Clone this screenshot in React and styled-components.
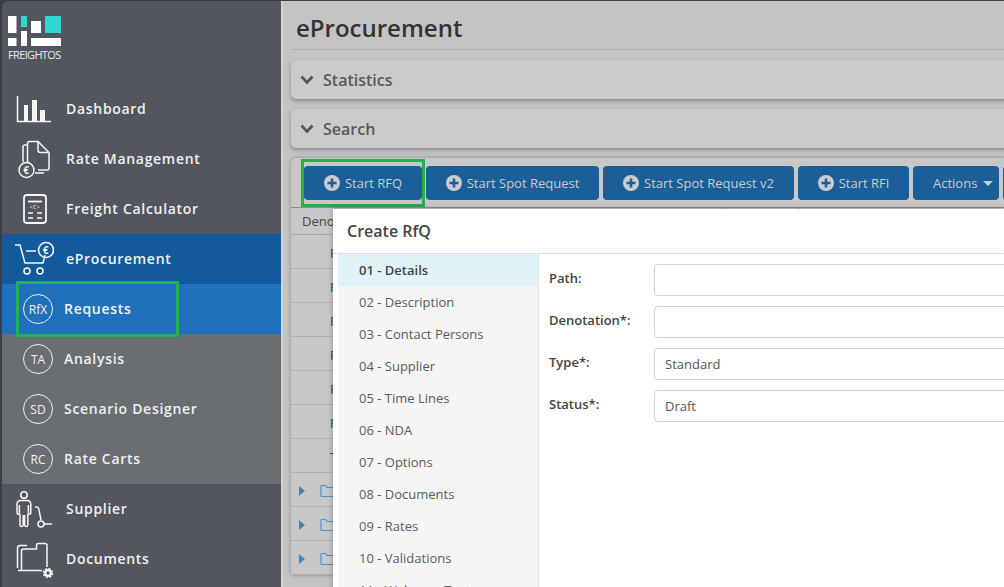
import React from "react";
import styled, { createGlobalStyle } from "styled-components";

const GlobalStyle = createGlobalStyle`
  html, body {
    margin: 0;
    height: 100%;
    overflow: hidden;
    background: #c4c4c4;
    font-family: "Open Sans", "Liberation Sans", sans-serif;
  }
  * { box-sizing: border-box; }
`;

const navTop = [
  { label: "Dashboard", icon: <DashboardIcon /> },
  { label: "Rate Management", icon: <RateIcon /> },
  { label: "Freight Calculator", icon: <CalculatorIcon /> },
];

const navSub = [
  { badge: "RfX", label: "Requests", active: true },
  { badge: "TA", label: "Analysis" },
  { badge: "SD", label: "Scenario Designer" },
  { badge: "RC", label: "Rate Carts" },
];

const toolbarButtons = [
  { label: "Start RFQ", width: 118, marked: true },
  { label: "Start Spot Request", width: 173 },
  { label: "Start Spot Request v2", width: 191 },
  { label: "Start RFI", width: 111 },
];

const steps = [
  "01 - Details", "02 - Description", "03 - Contact Persons", "04 - Supplier",
  "05 - Time Lines", "06 - NDA", "07 - Options", "08 - Documents",
  "09 - Rates", "10 - Validations", "11 - Welcome Text",
];

const rows = ["F", "F", "F", "F", "F", "F", "T"];

function Svg({ children }) {
  return (
    <svg width="40" height="44" viewBox="0 0 40 44" fill="none" stroke="#f6f6f6" strokeWidth="1.5">
      {children}
    </svg>
  );
}

function DashboardIcon() {
  return (
    <Svg>
      <path d="M3.5 9V34.5H37" />
      <path d="M10 18h4v16h-4zM18 13h5v21h-5zM26 23h5v11h-5z" fill="#f6f6f6" stroke="none" />
    </Svg>
  );
}

function RateIcon() {
  return (
    <Svg>
      <path d="M13.5 25V6.5a2 2 0 0 1 2-2H24L35 15.5V31a2 2 0 0 1-2 2H24" />
      <path d="M24 4.5V13a2.5 2.5 0 0 0 2.5 2.5H35" />
      <path d="M13.5 8H11a2 2 0 0 0-2 2V25" />
      <path d="M21 36H30" />
      <circle cx="12.5" cy="33" r="7.5" />
      <text x="12.5" y="36.5" fontSize="10" fontWeight="700" textAnchor="middle" fill="#f6f6f6" stroke="none">€</text>
    </Svg>
  );
}

function CalculatorIcon() {
  return (
    <Svg>
      <rect x="10" y="8" width="22" height="28" rx="3" strokeWidth="1.8" />
      <path d="M14 14.5H28" strokeWidth="1.8" />
      <text x="21" y="21.5" fontSize="5" textAnchor="middle" fill="#e0e0e0" stroke="none">{"<C>"}</text>
      <path d="M14 26H19M23 26H28M14 31H19M23 31H28" strokeWidth="1.6" />
    </Svg>
  );
}

function CartIcon() {
  return (
    <Svg>
      <path d="M1 8H6L11 26H29L31 18" />
      <path d="M12 14H22" />
      <circle cx="32" cy="13" r="7.5" strokeWidth="1.6" />
      <text x="32" y="16.5" fontSize="10" fontWeight="700" textAnchor="middle" fill="#f6f6f6" stroke="none">€</text>
      <circle cx="13" cy="34" r="3" />
      <circle cx="26" cy="34" r="3" />
    </Svg>
  );
}

function SupplierIcon() {
  return (
    <Svg>
      <circle cx="10" cy="8" r="3.2" />
      <path d="M6 27V38a1.6 1.6 0 0 0 3.2 0V28M10.6 28V38a1.6 1.6 0 0 0 3.2 0V27" />
      <path d="M3 26V17a3.5 3.5 0 0 1 3.5-3.5h6.8A3.5 3.5 0 0 1 16.8 17V26a1.2 1.2 0 0 1-2.4 0V18M5.4 18V26a1.2 1.2 0 0 1-2.4 0" />
      <path d="M21 20H23C24 20 24.5 21 24.8 22L27 33" />
      <circle cx="27" cy="37" r="3" />
      <path d="M30 37H38" />
    </Svg>
  );
}

function DocumentsIcon() {
  return (
    <Svg>
      <path d="M3.5 31V11a2.5 2.5 0 0 1 2.5-2.5h7" />
      <path d="M7.5 34V14a2 2 0 0 1 2-2H22.5V8.5a2 2 0 0 1 2-2H31a2 2 0 0 1 2 2V30" />
      <path d="M4 33.5H28" />
      <circle cx="34" cy="36" r="2.8" strokeWidth="2.2" />
      <circle cx="34" cy="36" r="4.4" strokeWidth="1.6" strokeDasharray="2 1.45" />
    </Svg>
  );
}

const Page = styled.div`
  display: flex;
  width: 1004px;
  height: 587px;
  overflow: hidden;
  background: #3e3e42;
`;

const Sidebar = styled.nav`
  width: 281px;
  flex: none;
  height: 587px;
  margin-top: 1px;
  padding-left: 2px;
  background: #3e3e42;
`;

const SideInner = styled.div`
  height: 100%;
  background: #53565e;
  border-top-left-radius: 6px;
`;

const LogoBlock = styled.div`
  height: 83px;
  padding: 15px 0 0 6px;
  color: #ececec;
`;

const LogoMark = styled.svg`
  display: block;
`;

const LogoText = styled.div`
  font-size: 11px;
  font-weight: 500;
  line-height: 12px;
  margin-top: 3px;
  letter-spacing: -0.65px;
`;

const NavRow = styled.div`
  position: relative;
  height: 50px;
  display: flex;
  align-items: center;
  color: #f0f0f0;
  font-size: 14px;
  font-weight: 600;
  letter-spacing: 0.7px;
  background: ${(p) => (p.$tone === "group" ? "#125a9b" : p.$tone === "active" ? "#2071bb" : p.$tone === "sub" ? "#6b6e71" : "transparent")};
`;

const NavLabel = styled.span`
  margin-top: -1px;
`;

const IconSlot = styled.span`
  width: 40px;
  height: 44px;
  margin-left: 12px;
  margin-right: 12px;
  display: flex;
`;

const Badge = styled.span`
  width: 30px;
  height: 30px;
  margin-left: 21px;
  margin-right: 11px;
  border: 1px solid #f0f0f0;
  border-radius: 50%;
  display: flex;
  align-items: center;
  justify-content: center;
  font-size: 12px;
  font-weight: 400;
  letter-spacing: 0;
`;

const NavMark = styled.span`
  position: absolute;
  z-index: 1;
  left: 14px;
  top: -3px;
  width: 163px;
  height: 56px;
  border: 3px solid #22b14c;
`;

const Main = styled.main`
  position: relative;
  flex: 1;
  min-width: 0;
  margin-top: 1px;
  padding-left: 8px;
  background: #c4c4c4;
  border-left: 2px solid #d4d4d4;
  overflow: hidden;
`;

const Title = styled.h1`
  margin: 0 0 10px 0;
  height: 49px;
  padding: 10px 0 0 5px;
  font-size: 24px;
  line-height: 34px;
  font-weight: 600;
  color: #333;
  border-bottom: 1px solid #b1b1b1;
`;

const Panel = styled.section`
  height: 39px;
  margin: 0 -6px 10px 0;
  padding-left: 9px;
  display: flex;
  align-items: center;
  gap: 9px;
  background: #cbcbcb;
  border-radius: 5px;
  box-shadow: 0 2px 4px rgba(0, 0, 0, 0.3);
  color: #5a5a5a;
  font-size: 16px;
  font-weight: 600;
`;

const TableCard = styled.section`
  margin: 0 -6px 0 0;
  background: #c8c8c8;
  border-radius: 5px 5px 0 0;
  box-shadow: 0 0 4px rgba(0, 0, 0, 0.3);
`;

const Toolbar = styled.div`
  display: flex;
  gap: 4px;
  height: 49px;
  padding: 8px 0 0 13px;
`;

const ToolButton = styled.div`
  position: relative;
  flex: none;
  width: ${(p) => p.$width}px;
  height: 34px;
  padding-left: ${(p) => p.$inset || 0}px;
  display: flex;
  align-items: center;
  justify-content: ${(p) => (p.$inset ? "flex-start" : "center")};
  gap: 5px;
  background: #1a5f99;
  border-radius: 4px;
  color: #c9ccd0;
  font-size: 13px;
`;

const ButtonMark = styled.span`
  position: absolute;
  left: -3px;
  top: -7px;
  width: 124px;
  height: 48px;
  border: 3px solid #22b14c;
`;

const Caret = styled.span`
  width: 0;
  height: 0;
  margin-left: 1px;
  border-left: 5px solid transparent;
  border-right: 5px solid transparent;
  border-top: 5px solid #c9ccd0;
`;

const HeadRow = styled.div`
  display: flex;
  height: 28px;
  border-top: 1px solid #8f8f8f;
  border-bottom: 1px solid #aaa;
  font-size: 13px;
  color: #444;
  line-height: 26px;
`;

const HeadCell = styled.div`
  width: ${(p) => p.$width}px;
  padding-left: 11px;
  border-right: 1px solid #9c9c9c;
`;

const Row = styled.div`
  height: 34px;
  padding-top: 2px;
  display: flex;
  align-items: center;
  padding-left: ${(p) => (p.$folder ? 8 : 39)}px;
  border-bottom: 1px solid #b0b0b0;
  font-size: 13px;
  color: #444;
`;

const Triangle = styled.span`
  width: 0;
  height: 0;
  border-top: 5px solid transparent;
  border-bottom: 5px solid transparent;
  border-left: 6px solid #4285bd;
  margin-right: 15px;
`;

const Modal = styled.div`
  position: absolute;
  left: 50px;
  top: 208px;
  right: 0;
  height: 400px;
  background: #fff;
  box-shadow: 0 0 6px rgba(0, 0, 0, 0.3);
`;

const ModalTitle = styled.h2`
  margin: 0;
  height: 45px;
  padding-left: 14px;
  font-size: 16px;
  line-height: 44px;
  font-weight: 600;
  color: #444;
  border-bottom: 1px dotted #c8c8c8;
`;

const ModalBody = styled.div`
  display: flex;
  height: 355px;
`;

const StepList = styled.ul`
  list-style: none;
  margin: 0 0 0 5px;
  padding: 0;
  width: 201px;
  flex: none;
  background: #f5f5f5;
  border-right: 1px solid #e2e2e2;
`;

const Step = styled.li`
  height: 32px;
  padding-left: 21px;
  line-height: 32px;
  font-size: 13px;
  font-weight: ${(p) => (p.$active ? 600 : 400)};
  color: ${(p) => (p.$active ? "#444" : "#5c5c5c")};
  background: ${(p) => (p.$active ? "#e0f3f8" : "transparent")};
`;

const Form = styled.div`
  flex: 1;
  min-width: 0;
  padding: 10px 0 0 10px;
`;

const FormRow = styled.label`
  display: flex;
  align-items: center;
  height: 32px;
  margin: 0 -12px 10px 0;
`;

const FieldLabel = styled.span`
  width: 105px;
  flex: none;
  margin-bottom: 4px;
  font-size: 13px;
  font-weight: 600;
  color: #444;
`;

const Field = styled.input`
  flex: 1;
  min-width: 0;
  height: 32px;
  padding: 0 10px;
  border: 1px solid #d2d2d2;
  border-radius: 4px;
  background: #fff;
  font-family: inherit;
  font-size: 13px;
  color: #555;
  outline: none;
`;

export default function App() {
  return (
    <Page>
      <GlobalStyle />
      <Sidebar>
        <SideInner>
          <LogoBlock>
            <LogoMark width="53" height="30" viewBox="0 0 53 30">
              <g fill="#fff">
                <rect x="0" y="0" width="8.5" height="17" />
                <rect x="23" y="5" width="10" height="12" />
                <rect x="0" y="22" width="8.5" height="8" />
                <rect x="13" y="15" width="6" height="15" />
                <rect x="23" y="22" width="30" height="8" />
              </g>
              <g fill="#33d6cf">
                <rect x="13" y="0" width="6" height="11" />
                <rect x="37" y="0" width="16" height="17" />
              </g>
            </LogoMark>
            <LogoText>FREIGHTOS</LogoText>
          </LogoBlock>
          {navTop.map((item) => (
            <NavRow key={item.label}>
              <IconSlot>{item.icon}</IconSlot>
              <NavLabel>{item.label}</NavLabel>
            </NavRow>
          ))}
          <NavRow $tone="group">
            <IconSlot><CartIcon /></IconSlot>
            <NavLabel>eProcurement</NavLabel>
          </NavRow>
          {navSub.map((item) => (
            <NavRow key={item.label} $tone={item.active ? "active" : "sub"}>
              <Badge>{item.badge}</Badge>
              <NavLabel>{item.label}</NavLabel>
              {item.active && <NavMark />}
            </NavRow>
          ))}
          <NavRow>
            <IconSlot><SupplierIcon /></IconSlot>
            <NavLabel>Supplier</NavLabel>
          </NavRow>
          <NavRow>
            <IconSlot><DocumentsIcon /></IconSlot>
            <NavLabel>Documents</NavLabel>
          </NavRow>
        </SideInner>
      </Sidebar>
      <Main>
        <Title>eProcurement</Title>
        <Panel>
          <svg width="14" height="10" viewBox="0 0 14 10" fill="none" stroke="#555" strokeWidth="2.6"><path d="M1.5 1.5L7 7.5L12.5 1.5" /></svg>
          Statistics
        </Panel>
        <Panel>
          <svg width="14" height="10" viewBox="0 0 14 10" fill="none" stroke="#555" strokeWidth="2.6"><path d="M1.5 1.5L7 7.5L12.5 1.5" /></svg>
          Search
        </Panel>
        <TableCard>
          <Toolbar>
            {toolbarButtons.map((b) => (
              <ToolButton key={b.label} $width={b.width}>
                <svg width="16" height="16" viewBox="0 0 16 16">
                  <circle cx="8" cy="8" r="8" fill="#c9ccd0" />
                  <path d="M8 3.5V12.5M3.5 8H12.5" stroke="#1a5f99" strokeWidth="2.6" />
                </svg>
                {b.label}
                {b.marked && <ButtonMark />}
              </ToolButton>
            ))}
            <ToolButton $width={86} $inset={20}>Actions <Caret /></ToolButton>
            <ToolButton $width={40} />
          </Toolbar>
          <HeadRow>
            <HeadCell $width={434}>Denotation</HeadCell>
            <HeadCell $width={75} />
          </HeadRow>
          {rows.map((r, i) => (
            <Row key={i}>{r}</Row>
          ))}
          {[0, 1, 2].map((i) => (
            <Row key={i} $folder>
              <Triangle />
              <svg width="16" height="14" viewBox="0 0 16 14" fill="none" stroke="#4f94c9" strokeWidth="1.2">
                <path d="M1 2.5a1 1 0 0 1 1-1h3.5l1.5 2h8v9H2a1 1 0 0 1-1-1z" />
              </svg>
            </Row>
          ))}
        </TableCard>
        <Modal>
          <ModalTitle>Create RfQ</ModalTitle>
          <ModalBody>
            <StepList>
              {steps.map((s, i) => (
                <Step key={s} $active={i === 0}>{s}</Step>
              ))}
            </StepList>
            <Form>
              <FormRow><FieldLabel>Path:</FieldLabel><Field readOnly /></FormRow>
              <FormRow><FieldLabel>Denotation*:</FieldLabel><Field readOnly /></FormRow>
              <FormRow><FieldLabel>Type*:</FieldLabel><Field readOnly value="Standard" /></FormRow>
              <FormRow><FieldLabel>Status*:</FieldLabel><Field readOnly value="Draft" /></FormRow>
            </Form>
          </ModalBody>
        </Modal>
      </Main>
    </Page>
  );
}
